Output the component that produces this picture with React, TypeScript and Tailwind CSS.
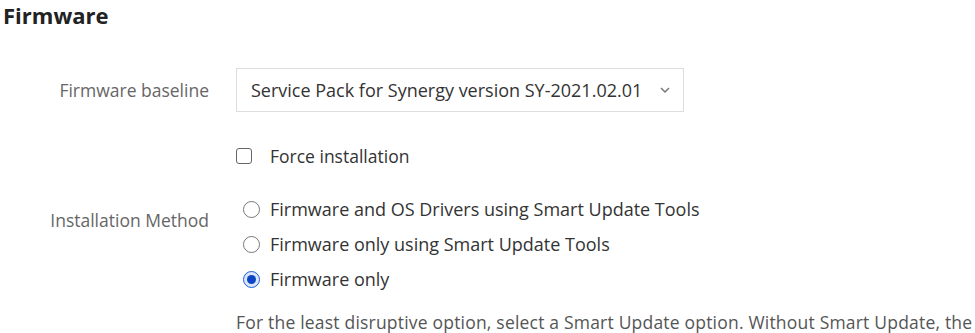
const options = [
  "Firmware and OS Drivers using Smart Update Tools",
  "Firmware only using Smart Update Tools",
  "Firmware only",
];

const App = () => {
  return (
    <div className="w-[975px] h-[333px] overflow-hidden bg-white font-['Open_Sans',sans-serif]">
      {/* heading */}
      <h2 className="pl-[3px] pt-[1px] text-[22px] leading-[28px] font-bold text-[#222]">Firmware</h2>

      <div className="grid grid-cols-[209px_1fr] gap-x-[27px] mt-[39px]">
        {/* baseline */}
        <div className="flex items-center justify-end h-[44px] text-[17.5px] text-[#666] whitespace-nowrap">Firmware baseline</div>
        <div>
          <div className="w-[448px] h-[44px] border border-[#ddd] flex items-center justify-between pl-[14px] pr-[12px]">
            <span className="text-[18px] text-[#333] whitespace-nowrap">Service Pack for Synergy version SY-2021.02.01</span>
            <svg width="12" height="8" viewBox="0 0 12 8" fill="none" stroke="#777" strokeWidth="1.5">
              <path d="M2 2l4 4 4-4" />
            </svg>
          </div>
        </div>

        {/* force install */}
        <div />
        <div className="flex items-center gap-[18px] mt-[36px] h-[16px]">
          <div className="w-[16px] h-[16px] border-[1.5px] border-[#666] rounded-[3px]" />
          <span className="text-[17.5px] text-[#333]">Force installation</span>
        </div>

        {/* installation method */}
        <div className="flex justify-end pt-[44px] text-[17.5px] leading-[24px] text-[#666] whitespace-nowrap">Installation Method</div>
        <div className="pt-[33px]">
          <div className="flex flex-col gap-[11px] pl-[7px]">
            {options.map((o, i) => (
              <div key={o} className="flex items-center gap-[10px] h-[24px]">
                {i === 2 ? (
                  <div className="w-[17px] h-[17px] rounded-full border-[1.5px] border-[#1a5fd8] bg-[#dbe6fb] flex items-center justify-center">
                    <div className="w-[9px] h-[9px] rounded-full bg-[#0b45c4]" />
                  </div>
                ) : (
                  <div className="w-[17px] h-[17px] rounded-full border-[1.5px] border-[#777]" />
                )}
                <span className="text-[18px] text-[#333] whitespace-nowrap">{o}</span>
              </div>
            ))}
          </div>
          <p className="mt-[21px] text-[17.5px] leading-[20px] tracking-[0.2px] text-[#555] whitespace-nowrap">
            For the least disruptive option, select a Smart Update option. Without Smart Update, the
          </p>
        </div>
      </div>
    </div>
  );
};

export default App;
